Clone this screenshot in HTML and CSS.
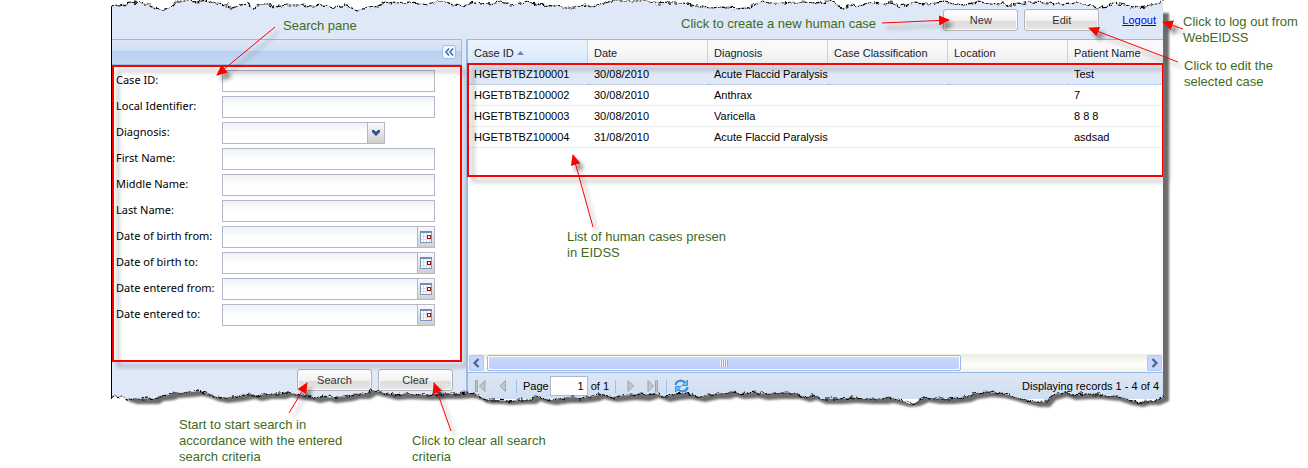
FILE: index.html
```html
<!DOCTYPE html>
<html lang="en">
<head>
<meta charset="utf-8">
<title>WebEIDSS human cases</title>
<link rel="stylesheet" href="styles.css">
</head>
<body>
<svg class="defs" width="0" height="0" aria-hidden="true">
  <defs>
    <symbol id="calendar" viewBox="0 0 12 12">
      <rect x="0.5" y="0.5" width="11" height="11" fill="#fff" stroke="#7a98c4"/>
      <rect width="12" height="2" fill="#6d8fc0"/>
      <path d="M3.500 2v9M6.500 2v9M9.500 8v3M1 5.500h7M1 8.500h10" stroke="#dcdcdc"/>
      <rect x="7.500" y="4.500" width="3" height="3" fill="#fff" stroke="#8b1a1a"/>
    </symbol>
  </defs>
</svg>
<main class="stage">
  <section class="app">
    <header class="topbar">
      <button class="btn" type="button">New</button>
      <button class="btn" type="button">Edit</button>
      <a class="logout" href="#">Logout</a>
    </header>
    <div class="panes">
      <form class="search">
        <div class="search-head">
          <button class="collapse" type="button" aria-label="Collapse search pane">
            <svg width="9" height="8" viewBox="0 0 9 8"><path d="M4 0.500L1 4l3 3.500M8 0.500L5 4l3 3.500" fill="none" stroke="#3f6ba5" stroke-width="1.500"/></svg>
          </button>
        </div>
        <div class="fields">
          <label for="case">Case ID:</label><input class="text" id="case" type="text">
          <label for="local">Local Identifier:</label><input class="text" id="local" type="text">
          <label for="diag">Diagnosis:</label>
          <div class="combo combo-short"><select id="diag"><option></option></select><span class="trigger"><svg width="8" height="6" viewBox="0 0 8 6"><path d="M0 0h2l2 2 2-2h2v2L4 6 0 2z" fill="#2d4f94"/></svg></span></div>
          <label for="first">First Name:</label><input class="text" id="first" type="text">
          <label for="middle">Middle Name:</label><input class="text" id="middle" type="text">
          <label for="last">Last Name:</label><input class="text" id="last" type="text">
          <label for="bfrom">Date of birth from:</label>
          <div class="combo"><input id="bfrom" type="text"><button class="trigger" type="button" aria-label="Pick date"><svg width="12" height="12"><use href="#calendar"/></svg></button></div>
          <label for="bto">Date of birth to:</label>
          <div class="combo"><input id="bto" type="text"><button class="trigger" type="button" aria-label="Pick date"><svg width="12" height="12"><use href="#calendar"/></svg></button></div>
          <label for="efrom">Date entered from:</label>
          <div class="combo"><input id="efrom" type="text"><button class="trigger" type="button" aria-label="Pick date"><svg width="12" height="12"><use href="#calendar"/></svg></button></div>
          <label for="eto">Date entered to:</label>
          <div class="combo"><input id="eto" type="text"><button class="trigger" type="button" aria-label="Pick date"><svg width="12" height="12"><use href="#calendar"/></svg></button></div>
          <div class="frame frame-fields"></div>
        </div>
        <div class="actions">
          <button class="btn" type="button">Search</button>
          <button class="btn" type="button">Clear</button>
        </div>
      </form>
      <section class="grid">
        <table class="cases">
          <thead>
            <tr><th class="sorted">Case ID <svg width="7" height="4" viewBox="0 0 7 4"><path d="M3.500 0L7 4H0z" fill="#5a8fd0"/></svg></th><th>Date</th><th>Diagnosis</th><th>Case Classification</th><th>Location</th><th class="last">Patient Name</th></tr>
          </thead>
          <tbody>
            <tr class="selected"><td>HGETBTBZ100001</td><td>30/08/2010</td><td>Acute Flaccid Paralysis</td><td></td><td></td><td>Test</td></tr>
            <tr><td>HGETBTBZ100002</td><td>30/08/2010</td><td>Anthrax</td><td></td><td></td><td>7</td></tr>
            <tr><td>HGETBTBZ100003</td><td>30/08/2010</td><td>Varicella</td><td></td><td></td><td>8 8 8</td></tr>
            <tr><td>HGETBTBZ100004</td><td>31/08/2010</td><td>Acute Flaccid Paralysis</td><td></td><td></td><td>asdsad</td></tr>
          </tbody>
        </table>
        <div class="frame frame-cases"></div>
        <div class="scrollbar">
          <button class="scroll-btn" type="button" aria-label="Scroll left"><svg width="7" height="10" viewBox="0 0 7 10"><path d="M5.500 1L1.500 5l4 4" fill="none" stroke="#4d6185" stroke-width="2.200"/></svg></button>
          <div class="thumb"><span class="grip"></span></div>
          <div class="rest"></div>
          <button class="scroll-btn" type="button" aria-label="Scroll right"><svg width="7" height="10" viewBox="0 0 7 10"><path d="M1.500 1l4 4-4 4" fill="none" stroke="#4d6185" stroke-width="2.200"/></svg></button>
        </div>
        <div class="paging">
          <button class="tool" type="button" aria-label="First page"><svg width="11" height="12" viewBox="0 0 11 12"><path d="M0.500 0.500h2v11h-2zM10 0.500v11L4.500 6z" fill="#c3c7cb" stroke="#a0a5aa"/></svg></button>
          <button class="tool" type="button" aria-label="Previous page"><svg width="11" height="12" viewBox="0 0 11 12"><path d="M8.500 0.500v11L3 6z" fill="#c3c7cb" stroke="#a0a5aa"/></svg></button>
          <span class="sep"></span>
          <label class="page-label" for="page">Page</label>
          <input class="page" id="page" type="text" value="1">
          <span class="page-of">of 1</span>
          <span class="sep"></span>
          <button class="tool" type="button" aria-label="Next page"><svg width="11" height="12" viewBox="0 0 11 12"><path d="M3 0.500v11L8.500 6z" fill="#c3c7cb" stroke="#a0a5aa"/></svg></button>
          <button class="tool" type="button" aria-label="Last page"><svg width="11" height="12" viewBox="0 0 11 12"><path d="M1 0.500v11L6.500 6zM8.500 0.500h2v11h-2z" fill="#c3c7cb" stroke="#a0a5aa"/></svg></button>
          <span class="sep"></span>
          <button class="tool" type="button" aria-label="Refresh"><svg width="15" height="14" viewBox="0 0 15 14"><path d="M1.500 6C2 2 7 0 11 3.500M13.500 8C13 12 8 14 4 10.500" fill="none" stroke="#3c8ee0" stroke-width="2.200"/><path d="M13.500 1v5.500H8zM1.500 13V7.500H7z" fill="#6fc0f6" stroke="#2f7fd2" stroke-width="0.800"/></svg></button>
          <span class="status">Displaying records 1 - 4 of 4</span>
        </div>
      </section>
    </div>
    <svg class="torn" viewBox="111 0 1062 412" preserveAspectRatio="none" aria-hidden="true">
      <defs>
        <clipPath id="outside"><path d="M111 412V398L114 396 119 397 123 397 127 400 132 399 142 399 149 398 154 399 159 396 169 395 174 392 181 393 188 392 193 392 198 391 206 393 213 396 223 398 232 397 240 396 250 394 257 396 267 394 281 394 287 392 294 394 308 396 315 398 325 396 331 398 348 396 355 394 365 394 372 390 380 392 392 395 406 394 426 395 440 394 456 394 468 393 475 394 482 398 487 400 497 400 507 401 521 400 531 400 536 396 541 398 551 400 565 398 578 398 588 397 595 396 599 394 612 397 630 395 640 394 647 395 654 393 665 397 675 394 686 393 700 397 714 394 725 394 731 391 739 394 754 392 763 394 777 393 795 393 802 396 807 398 812 394 821 399 837 399 852 398 868 399 882 399 889 397 903 401 910 404 915 403 924 397 935 399 949 399 966 397 973 394 987 392 1001 393 1012 396 1022 399 1036 402 1045 402 1052 395 1066 392 1071 395 1085 394 1099 394 1106 396 1117 396 1127 399 1138 403 1145 401 1155 401 1163 397V0H1180V412Z"/></clipPath>
        <filter id="soft" x="-5%" y="-5%" width="110%" height="110%"><feGaussianBlur stdDeviation="1.200"/></filter>
        <filter id="jag" filterUnits="userSpaceOnUse" x="105" y="-5" width="1070" height="420"><feTurbulence type="fractalNoise" baseFrequency="0.180" numOctaves="2" seed="4"/><feDisplacementMap in="SourceGraphic" scale="6" xChannelSelector="R" yChannelSelector="G"/></filter>
      </defs>
      <path class="paper" d="M111 0V7L115 5 120 6 130 3 136 2 144 4 150 5 156 8 163 10 169 8 173 6 177 1 186 1 198 2 206 0 217 4 227 5 232 8 240 5 248 4 253 8 260 4 267 4 275 7 287 5 300 5 312 6 324 5 334 8 345 5 356 10 369 8 378 6 386 2 398 4 410 2 420 3 428 5 436 2 446 2 454 5 463 6 475 2 487 4 495 3 500 2 510 5 520 4 528 2 540 5 556 6 563 8 574 8 584 5 592 7 600 4 612 1 633 1 649 1 658 4 670 3 684 3 695 6 711 8 722 7 735 9 747 8 756 4 762 1 780 3 800 2 815 3 829 1 836 4 843 8 852 5 858 7 868 2 880 4 890 2 900 7 910 3 927 4 945 2 955 4 965 5 976 2 990 3 1010 5 1022 4 1031 2 1047 3 1060 4 1078 2 1086 5 1098 8 1107 6 1114 3 1125 5 1136 8 1150 5 1163 2V0Z"/>
      <g clip-path="url(#outside)">
        <rect class="paper" x="111" y="385" width="1053" height="27"/>
        <path class="cast" filter="url(#soft)" d="M1140 13H1169V401L1160 405 1150 405 1143 407 1132 405 1120 401 1110 400 1101 399 1090 399 1076 400 1067 397 1056 400 1050 407 1040 407 1027 404 1017 401 1005 398 992 397 978 399 971 402 954 404 940 404 929 402 920 406 910 407 894 403 887 404 873 404 857 403 842 404 826 404 817 400 810 402 800 399 782 399 768 400 759 398 744 399 736 397 730 399 719 399 705 402 691 399 680 400 670 402 659 398 650 401 635 400 617 402 604 399 600 401 593 402 583 403 570 403 556 405 546 403 541 401 536 404 526 404 512 405 502 404 492 404 487 403 480 399 473 398 461 399 445 399 431 400 411 399 397 400 385 397 377 395 370 399 360 399 353 401 336 403 330 401 320 403 313 401 299 399 292 397 286 399 272 399 262 401 255 399 245 401 237 402 228 403 218 401 211 398 203 396 193 397 179 398 174 400 164 401 159 404 147 404 137 404 128 401V385H1140Z"/>
      </g>
      <path class="rip" d="M111 398L114 396 119 397 123 397 127 400 132 399 142 399 149 398 154 399 159 396 169 395 174 392 181 393 188 392 193 392 198 391 206 393 213 396 223 398 232 397 240 396 250 394 257 396 267 394 281 394 287 392 294 394 308 396 315 398 325 396 331 398 348 396 355 394 365 394 372 390 380 392 392 395 406 394 426 395 440 394 456 394 468 393 475 394 482 398 487 400 497 400 507 401 521 400 531 400 536 396 541 398 551 400 565 398 578 398 588 397 595 396 599 394 612 397 630 395 640 394 647 395 654 393 665 397 675 394 686 393 700 397 714 394 725 394 731 391 739 394 754 392 763 394 777 393 795 393 802 396 807 398 812 394 821 399 837 399 852 398 868 399 882 399 889 397 903 401 910 404 915 403 924 397 935 399 949 399 966 397 973 394 987 392 1001 393 1012 396 1022 399 1036 402 1045 402 1052 395 1066 392 1071 395 1085 394 1099 394 1106 396 1117 396 1127 399 1138 403 1145 401 1155 401 1163 397"/>
      <path class="rip" d="M111 7L115 5 120 6 130 3 136 2 144 4 150 5 156 8 163 10 169 8 173 6 177 1 186 1 198 2 206 0 217 4 227 5 232 8 240 5 248 4 253 8 260 4 267 4 275 7 287 5 300 5 312 6 324 5 334 8 345 5 356 10 369 8 378 6 386 2 398 4 410 2 420 3 428 5 436 2 446 2 454 5 463 6 475 2 487 4 495 3 500 2 510 5 520 4 528 2 540 5 556 6 563 8 574 8 584 5 592 7 600 4 612 1 633 1 649 1 658 4 670 3 684 3 695 6 711 8 722 7 735 9 747 8 756 4 762 1 780 3 800 2 815 3 829 1 836 4 843 8 852 5 858 7 868 2 880 4 890 2 900 7 910 3 927 4 945 2 955 4 965 5 976 2 990 3 1010 5 1022 4 1031 2 1047 3 1060 4 1078 2 1086 5 1098 8 1107 6 1114 3 1125 5 1136 8 1150 5 1163 2"/>
    </svg>
  </section>

  <svg class="arrows" width="1308" height="468" viewBox="0 0 1308 468" aria-hidden="true">
    <defs><marker id="head" markerUnits="userSpaceOnUse" markerWidth="11" markerHeight="10" refX="10" refY="5" orient="auto"><path d="M0 0L11 5 0 10z" fill="#f00"/></marker></defs>
    <path d="M275 27L217 75"/>
    <path d="M882 23L949 20"/>
    <path d="M1178 62L1089 28"/>
    <path d="M1183 29L1163 22"/>
    <path d="M593 227L573 155"/>
    <path d="M289 413L307 383"/>
    <path d="M451 431L434 383"/>
  </svg>
  <p class="note note-pane">Search pane</p>
  <p class="note note-new">Click to create a new human case</p>
  <p class="note note-logout">Click to log out from<br>WebEIDSS</p>
  <p class="note note-edit">Click to edit the<br>selected case</p>
  <p class="note note-list">List of human cases presen<br>in EIDSS</p>
  <p class="note note-search">Start to start search in<br>accordance with the entered<br>search criteria</p>
  <p class="note note-clear">Click to clear all search<br>criteria</p>
</main>
</body>
</html>
```
FILE: styles.css
```css
* { box-sizing: border-box; }
body { margin: 0; background: #fff; font: 11px "Liberation Sans", Arial, sans-serif; color: #000; }
button, input, select { font: inherit; color: inherit; margin: 0; }
button { padding: 0; }
.defs { position: absolute; }
.stage { position: relative; min-height: 468px; padding: 0 145px 0 111px; }
.app { position: relative; background: #dfe8f6; border-left: 1px solid #000; }

.topbar { display: flex; justify-content: flex-end; align-items: flex-start; gap: 6px; height: 39px; padding: 9px 7px 0 0; }
.btn { width: 75px; height: 22px; border: 1px solid #b4b4b4; border-radius: 3px; color: #333; background: linear-gradient(#fff, #f1f1f1 55%, #dcdcdc 56%, #e8e8e8); box-shadow: inset 0 0 0 1px #fafafa; }
.logout { margin-left: 17px; line-height: 22px; color: #00f; }

.panes { display: flex; gap: 4px; }
.search { width: 350px; display: flex; flex-direction: column; }
.search-head { height: 26px; display: flex; justify-content: flex-end; align-items: center; padding-right: 5px; border: 1px solid #99bbe8; border-left: 0; background: linear-gradient(#dce8f7, #cfdff3 45%, #b9cfee 46%, #c6d9f2); }
.collapse { display: flex; align-items: center; justify-content: center; width: 14px; height: 14px; border: 1px solid #a0bfe8; border-radius: 3px; background: #f2f7fd; }
.fields { position: relative; display: grid; grid-template-columns: 106px 213px; grid-auto-rows: 22px; row-gap: 4px; align-items: center; height: 297px; padding: 5px 4px; background: #fff; font-family: "Noto Sans", Tahoma, sans-serif; }
.fields label { line-height: 16px; padding-bottom: 2px; }
.text, .combo { width: 100%; height: 22px; border: 1px solid #b5b8c8; background: linear-gradient(#edf1f1, #fff 10px); }
.combo { display: flex; }
.combo-short { width: 163px; }
.combo input, .combo select { flex: 1; min-width: 0; border: 0; padding: 0 3px; background: none; appearance: none; }
.trigger { display: flex; align-items: center; justify-content: center; width: 17px; border: 0; border-left: 1px solid #b5b8c8; background: linear-gradient(#fafafa, #e4e4e4 50%, #cfcfcf); }
.frame { position: absolute; border: 2px solid #f00; filter: drop-shadow(5px 5px 2px rgba(0, 0, 0, .32)); pointer-events: none; }
.frame-fields { inset: 0; }
.actions { display: flex; justify-content: flex-end; gap: 6px; height: 37px; padding: 7px 9px 0 0; }

.grid { position: relative; flex: 1; min-width: 0; display: flex; flex-direction: column; border: 1px solid #99bbe8; border-width: 1px 0 0 2px; background: #fff; }
.cases { width: 100%; table-layout: fixed; border-collapse: separate; border-spacing: 0; }
.cases th { width: 120px; height: 24px; padding: 2px 6px 0; text-align: left; font-weight: normal; color: #15232f; border-right: 1px solid #d0d0d0; background: linear-gradient(#fafafa, #f7f7f7 50%, #ebecee); white-space: nowrap; }
.cases .last { width: auto; border-right: 0; }
.cases .sorted { background: linear-gradient(#ebf3fd, #e4effc 50%, #d4e5fa); }
.sorted svg { vertical-align: 2px; }
.cases td { height: 21px; padding: 0 6px; border-bottom: 1px solid #ededed; white-space: nowrap; }
.cases .selected td { background: #dfe8f6; border-bottom: 1px dotted #a3bae9; }
.frame-cases { top: 23px; left: -1px; right: -1px; height: 114px; }

.scrollbar { display: flex; align-items: stretch; gap: 3px; height: 18px; margin-top: auto; padding: 1px; background: linear-gradient(#eeede5, #fefefb 60%, #f2f2ea); }
.scroll-btn { display: flex; align-items: center; justify-content: center; width: 15px; border: 1px solid #b4c8f6; border-radius: 2px; background: #c6d6fc; }
.thumb { flex: 476; display: flex; align-items: center; justify-content: center; border: 1px solid #9db5ee; border-radius: 2px; background: linear-gradient(#cbdafd, #bccdfa); box-shadow: inset 0 0 0 1px #fff; }
.rest { flex: 181; }
.grip { width: 8px; height: 7px; background: repeating-linear-gradient(90deg, #eef4fe 0 1px, #8cb0f8 1px 2px); }
.paging { display: flex; align-items: center; height: 27px; padding: 0 4px 0 1px; border-top: 1px solid #99bbe8; background: linear-gradient(#dce7f5, #cfdef1); }
.tool { display: flex; align-items: center; justify-content: center; width: 22px; height: 18px; border: 0; background: none; }
.sep { width: 1px; height: 13px; margin: 0 3px; background: #98c0f4; }
.page-label { margin-left: 3px; }
.page { width: 38px; height: 20px; margin: 0 3px 0 1px; padding: 0 3px; border: 1px solid #b5b8c8; background: #fff; text-align: right; }
.page-of { margin-right: 3px; }
.status { margin-left: auto; }

.torn { position: absolute; top: 0; left: -1px; width: calc(100% + 11px); height: 412px; pointer-events: none; }
.paper { fill: #fff; }
.cast { fill: #6c6c6c; }
.rip { fill: none; stroke: #000; stroke-width: 1.2; stroke-dasharray: 4 1 2 1; filter: url(#jag); }
.arrows { position: absolute; top: 0; left: 0; pointer-events: none; filter: drop-shadow(4px 5px 2px rgba(0, 0, 0, .45)); }
.arrows > path { stroke: #f00; fill: none; marker-end: url(#head); }

.note { position: absolute; margin: 0; font-size: 13px; line-height: 16px; color: #3f6b1c; white-space: nowrap; }
.note-pane { left: 283px; top: 18px; }
.note-new { left: 681px; top: 16px; }
.note-logout { left: 1183px; top: 14px; }
.note-edit { left: 1184px; top: 58px; }
.note-list { left: 567px; top: 229px; }
.note-search { left: 179px; top: 417px; }
.note-clear { left: 412px; top: 433px; }
```
